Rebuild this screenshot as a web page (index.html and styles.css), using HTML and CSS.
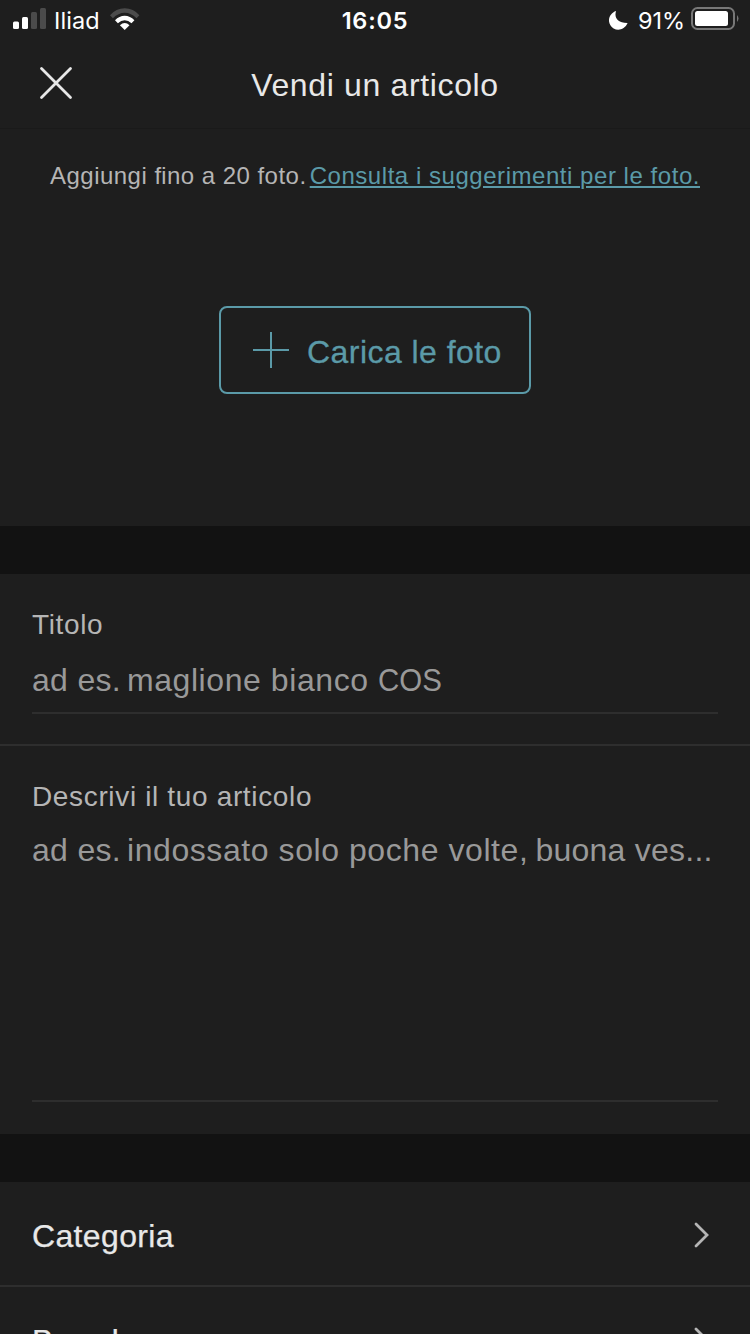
FILE: index.html
```html
<!DOCTYPE html>
<html lang="it">
<head>
<meta charset="utf-8">
<title>Vendi un articolo</title>
<link rel="stylesheet" href="styles.css">
</head>
<body>
<div class="screen">
  <div class="status">
    <div class="status-left">
      <svg class="signal" width="34" height="22" viewBox="0 0 34 22"><rect x="0" y="13.5" width="6" height="7.5" rx="1.5" fill="#fff"/><rect x="9" y="9" width="6" height="12" rx="1.5" fill="#fff"/><rect x="18" y="4" width="6" height="17" rx="1.5" fill="#4b4b4b"/><rect x="27" y="0" width="6" height="21" rx="1.5" fill="#4b4b4b"/></svg>
      <span class="carrier">Iliad</span>
      <svg class="wifi" width="30" height="22" viewBox="0 0 30 22"><path d="M0 7.3Q6 .3 14.7.3T29.4 7.3L26.5 10.2Q21 4.7 14.7 4.7T2.9 10.2Z" fill="#4b4b4b"/><path d="M5 12.3Q9.2 7.7 14.7 7.7T24.4 12.3L21.5 15.2Q18.3 12.2 14.7 12.2T7.9 15.2Z" fill="#fff"/><path d="M9.9 17.2Q14.7 13 19.5 17.2L14.7 22Z" fill="#fff"/></svg>
    </div>
    <span class="clock">16:05</span>
    <div class="status-right">
      <svg class="moon" width="19" height="19" viewBox="0 0 19 19"><path d="M7.1 0C4.9 6.5 8.4 12.3 18.6 12.1C15.8 18.5 9.3 20.3 4.6 17.5C-.2 14.7-1.6 8.2 1.9 3.7C3.3 1.9 5 .7 7.1 0Z" fill="#fff"/></svg>
      <span class="percent">91%</span>
      <svg class="battery" width="48" height="24" viewBox="0 0 48 24"><rect x="1" y="1" width="42" height="21" rx="5.5" fill="none" stroke="#777" stroke-width="2"/><rect x="4" y="4" width="33" height="15" rx="2.5" fill="#fff"/><path d="M46 8Q49 11.5 46 15Z" fill="#777"/></svg>
    </div>
  </div>
  <header class="header">
    <svg class="close" width="34" height="34" viewBox="0 0 34 34"><path d="M2.5 2.5L31.5 31.5M31.5 2.5L2.5 31.5" stroke="#e8e8e8" stroke-width="2.8" stroke-linecap="round"/></svg>
    <h1 class="title">Vendi un articolo</h1>
  </header>
  <section class="photos">
    <p class="hint"><span class="hint-text">Aggiungi ﬁno a 20 foto.</span><a class="hint-link">Consulta i suggerimenti per le foto.</a></p>
    <button class="upload"><svg width="36" height="36" viewBox="0 0 36 36"><path d="M18 0V36M0 18H36" stroke="#5b9aa8" stroke-width="2"/></svg><span class="upload-text">Carica le foto</span></button>
  </section>
  <section class="field field-title">
    <div class="label">Titolo</div>
    <div class="value"><span class="lead">ad es.</span><span class="sample">maglione bianco <span class="brand">COS</span></span></div>
  </section>
  <section class="field field-desc">
    <div class="label">Descrivi il tuo articolo</div>
    <div class="value value-desc"><span class="lead">ad es.</span><span class="sample">indossato solo poche volte,</span><span class="sample-end">buona ves...</span></div>
  </section>
  <nav class="rows">
    <div class="row"><span>Categoria</span><svg width="16" height="26" viewBox="0 0 16 26"><path d="M2 2L13 13L2 24" fill="none" stroke="#b5b5b5" stroke-width="2.8" stroke-linecap="round"/></svg></div>
    <div class="row"><span>Brand</span><svg width="16" height="26" viewBox="0 0 16 26"><path d="M2 2L13 13L2 24" fill="none" stroke="#b5b5b5" stroke-width="2.8" stroke-linecap="round"/></svg></div>
  </nav>
</div>
</body>
</html>
```
FILE: styles.css
```css
* { box-sizing: border-box; }
body { margin: 0; background: #121212; }
.screen {
  width: 750px; height: 1334px; overflow: hidden;
  display: flex; flex-direction: column;
  font-family: "Liberation Sans", Arial, sans-serif;
  font-size: 32px; line-height: 40px; color: #e8e8e8; white-space: nowrap;
}
.status {
  flex: none; height: 40px; padding: 0 11px 0 13px; background: #1e1e1e; color: #fff;
  display: grid; grid-template-columns: 1fr auto 1fr; align-items: center;
  font-family: Inter, "Liberation Sans", sans-serif; font-size: 23.5px; line-height: 38px;
}
.status-left, .status-right { display: flex; align-items: center; height: 40px; }
.status-right { justify-content: flex-end; }
.signal, .wifi, .battery { margin-bottom: 2px; }
.carrier { margin-left: 7px; padding-top: 1px; letter-spacing: .1px; }
.wifi { margin-left: 10px; }
.clock { margin-right: 2px; padding-top: 1px; font-weight: 600; letter-spacing: .8px; }
.moon { margin-right: 10px; margin-top: 1px; }
.percent { margin-right: 6px; padding-top: 1px; letter-spacing: -.1px; }
.header {
  flex: none; height: 89px; border-bottom: 1px solid #1a1a1a; background: #1e1e1e;
  display: grid; grid-template-columns: 39px 34px 1fr 73px; align-items: center;
}
.close { grid-column: 2; margin-bottom: 2px; }
.title { grid-column: 3; margin: 2px 0 0; text-align: center; font-size: 32px; font-weight: 400; letter-spacing: .65px; }
.photos { flex: none; height: 397px; background: #1e1e1e; padding-top: 31px; display: flex; flex-direction: column; align-items: center; }
.hint { margin: 0; width: 650px; height: 32px; display: flex; justify-content: space-between; font-size: 24px; line-height: 32px; color: #b5b5b5; }
.hint-text { letter-spacing: .48px; }
.hint-link { color: #5b9aa8; letter-spacing: .54px; text-decoration: underline; text-decoration-thickness: 2px; text-underline-offset: 2px; }
.upload {
  margin-top: 114px; width: 312px; height: 88px; padding: 0 0 0 32px;
  display: flex; align-items: center; gap: 18px;
  border: 2px solid #5b9aa8; border-radius: 8px; background: none; color: #5b9aa8;
  font: inherit;
}
.upload-text { padding-top: 4px; letter-spacing: .45px; -webkit-text-stroke: .3px #5b9aa8; }
.field { flex: none; background: #1e1e1e; padding-left: 32px; padding-right: 32px; }
.field-title { margin-top: 48px; height: 172px; padding-top: 33px; border-bottom: 2px solid #2e2e2e; }
.field-desc { height: 388px; padding-top: 33px; }
.label { font-size: 28px; line-height: 36px; color: #b5b5b5; letter-spacing: .65px; }
.value { display: flex; gap: 6px; height: 71px; padding-top: 17px; border-bottom: 2px solid #2e2e2e; color: #999; }
.value-desc { height: 287px; padding-top: 15px; }
.lead { letter-spacing: .3px; }
.sample { letter-spacing: .57px; }
.brand { display: inline-block; letter-spacing: 0; transform: scaleX(.92); transform-origin: left; }
.sample-end { padding-left: 1px; letter-spacing: .25px; }
.rows { margin-top: 48px; }
.row { height: 105px; padding: 3px 40px 0 32px; display: flex; align-items: center; justify-content: space-between; background: #1e1e1e; border-bottom: 2px solid #2e2e2e; letter-spacing: .35px; -webkit-text-stroke: .25px #e8e8e8; }
.row span { padding-top: 2px; }
```
